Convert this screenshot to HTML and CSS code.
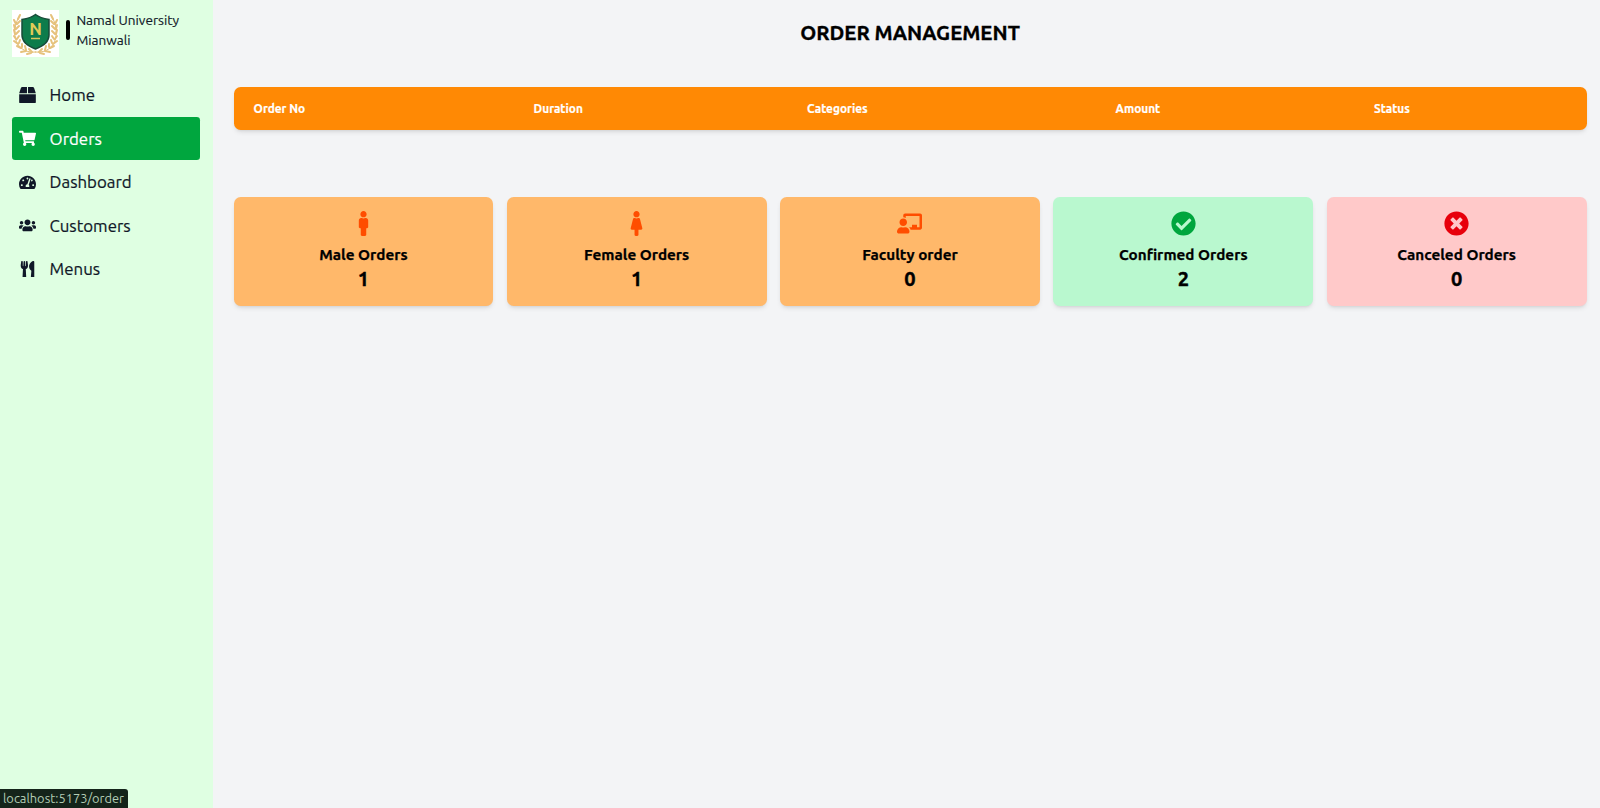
FILE: index.html
```html
<!DOCTYPE html>
<html lang="en">
<head>
<meta charset="utf-8">
<title>Order Management</title>
<link rel="stylesheet" href="styles.css">
</head>
<body>
<div class="app">
  <aside class="sidebar">
    <div class="brand">
      <svg class="logo" viewBox="0 0 47 47">
        <rect width="47" height="47" fill="#fff"/>
        <g fill="none" stroke="#e3bd73" stroke-width="1">
          <path d="M7 7C1 17 1 31 9 38q6 5 15 4M40 7c6 10 6 24-2 31q-6 5-15 4"/>
        </g>
        <g fill="none" stroke="#e6c27c" stroke-width="2" stroke-linecap="round">
          <path d="M6 9l2-4M4 14L2 10M5 14l3-3M3 19l-1-4M4 19l3-3M3 24l-1-4M4 24l3-3M4 29l-2-3M5 29l2-3M6 34l-4-3M7 33l1-3M9 38l-4-2M10 37l0-3M14 41l-5 1M14 40l-1-4M19 43l-4 1M20 42l-3-3"/>
          <path d="M41 9l-2-4M43 14l2-4M42 14l-3-3M44 19l1-4M43 19l-3-3M44 24l1-4M43 24l-3-3M43 29l2-3M42 29l-2-3M41 34l4-3M40 33l-1-3M38 38l4-2M37 37l0-3M33 41l5 1M33 40l1-4M28 43l4 1M27 42l3-3"/>
        </g>
        <path d="M23.500 4.500Q28 8 37 9.500V25q0 9-13.500 14Q10 34 10 25V9.500Q19 8 23.500 4.500z" fill="#0d7c4b" stroke="#174b38" stroke-width="1.500"/>
        <text class="logo-letter" x="23.500" y="25" text-anchor="middle">N</text>
        <path d="M19 28.500h9" stroke="#d9c95c" stroke-width="1.500"/>
      </svg>
      <span class="brand-bar"></span>
      <div class="brand-name">Namal University<br>Mianwali</div>
    </div>
    <nav class="nav">
      <a class="nav-item"><svg class="nav-icon" viewBox="0 0 512 512"><path d="M509.500 184.600L458.900 32.800C452.400 13.200 434.100 0 413.400 0H272v192h238.700c-.4-2.500-.4-5-1.200-7.400zM240 0H98.600c-20.700 0-39 13.200-45.500 32.800L2.500 184.600c-.8 2.400-.8 4.900-1.200 7.400H240V0zM0 224v240c0 26.500 21.500 48 48 48h416c26.500 0 48-21.500 48-48V224H0z"/></svg><span>Home</span></a>
      <a class="nav-item active"><svg class="nav-icon" viewBox="0 0 576 512"><path d="M528.120 301.319l47.273-208C578.806 78.301 567.391 64 551.990 64H159.208l-9.166-44.810C147.758 8.021 137.930 0 126.529 0H24C10.745 0 0 10.745 0 24v16c0 13.255 10.745 24 24 24h69.883l70.248 343.435C147.325 417.100 136 435.222 136 456c0 30.928 25.072 56 56 56s56-25.072 56-56c0-15.674-6.447-29.835-16.824-40h209.647C430.447 426.165 424 440.326 424 456c0 30.928 25.072 56 56 56s56-25.072 56-56c0-22.172-12.888-41.332-31.579-50.405l5.517-24.276c3.413-15.018-8.002-29.319-23.403-29.319H218.117l-6.545-32h293.145c11.206 0 20.920-7.754 23.403-18.681z"/></svg><span>Orders</span></a>
      <a class="nav-item"><svg class="nav-icon" viewBox="0 0 576 512"><path d="M288 32C128.940 32 0 160.940 0 320c0 52.800 14.250 102.260 39.060 144.800 5.610 9.620 16.300 15.200 27.440 15.200h443c11.140 0 21.830-5.580 27.440-15.200C561.750 422.260 576 372.800 576 320c0-159.060-128.940-288-288-288zm0 64c14.710 0 26.580 10.130 30.320 23.650-1.110 2.260-2.640 4.230-3.450 6.670l-9.220 27.670c-5.130 3.490-10.970 6.010-17.640 6.010-17.670 0-32-14.330-32-32S270.330 96 288 96zM96 384c-17.670 0-32-14.330-32-32s14.330-32 32-32 32 14.330 32 32-14.330 32-32 32zm48-160c-17.670 0-32-14.330-32-32s14.330-32 32-32 32 14.330 32 32-14.330 32-32 32zm246.770-72.410l-61.330 184C343.130 347.330 352 364.540 352 384c0 11.720-3.380 22.550-8.880 32H232.880c-5.500-9.450-8.880-20.280-8.880-32 0-33.940 26.500-61.430 59.900-63.590l61.340-184.010c4.170-12.560 17.730-19.450 30.360-15.170 12.570 4.190 19.350 17.790 15.170 30.360zm14.660 57.200l15.520-46.550c3.470-1.290 7.130-2.230 11.050-2.230 17.670 0 32 14.330 32 32s-14.330 32-32 32c-11.380-.01-20.890-6.280-26.570-15.220zM480 384c-17.670 0-32-14.330-32-32s14.330-32 32-32 32 14.330 32 32-14.330 32-32 32z"/></svg><span>Dashboard</span></a>
      <a class="nav-item"><svg class="nav-icon" viewBox="0 0 640 512"><path d="M96 224c35.300 0 64-28.700 64-64s-28.700-64-64-64-64 28.700-64 64 28.700 64 64 64zm448 0c35.300 0 64-28.700 64-64s-28.700-64-64-64-64 28.700-64 64 28.700 64 64 64zm32 32h-64c-17.600 0-33.500 7.100-45.100 18.600 40.300 22.100 68.900 62 75.100 109.400h66c17.700 0 32-14.300 32-32v-32c0-35.300-28.700-64-64-64zm-256 0c61.900 0 112-50.100 112-112S381.900 32 320 32 208 82.100 208 144s50.100 112 112 112zm76.800 32h-8.300c-20.800 10-43.900 16-68.500 16s-47.600-6-68.500-16h-8.300C179.600 288 128 339.600 128 403.200V432c0 26.500 21.500 48 48 48h288c26.500 0 48-21.500 48-48v-28.800c0-63.600-51.600-115.200-115.200-115.200zm-223.700-13.400C161.500 263.100 145.600 256 128 256H64c-35.300 0-64 28.700-64 64v32c0 17.700 14.300 32 32 32h65.900c6.300-47.400 34.900-87.300 75.200-109.400z"/></svg><span>Customers</span></a>
      <a class="nav-item"><svg class="nav-icon" viewBox="0 0 416 512"><path d="M207.900 15.200c.8 4.700 16.100 94.500 16.100 128.800 0 52.300-27.800 89.600-68.900 104.600L168 486.700c.7 13.700-10.200 25.300-24 25.300H80c-13.700 0-24.700-11.500-24-25.300l12.900-238.100C27.700 233.600 0 196.200 0 144 0 109.600 15.300 19.900 16.100 15.200 19.300-5.100 61.400-5.400 64 16.300v141.200c1.300 3.400 15.100 3.200 16 0 1.400-25.300 7.900-139.200 8-141.800 3.300-20.800 44.700-20.800 47.900 0 .2 2.700 6.600 116.500 8 141.800.9 3.200 14.800 3.400 16 0V16.300c2.600-21.600 44.800-21.400 47.900-1.100zm119.200 285.700l-15 185.100c-1.200 14 9.900 26 23.900 26h56c13.300 0 24-10.700 24-24V24c0-13.200-10.700-24-24-24-82.500 0-221.400 178.500-64.900 300.900z"/></svg><span>Menus</span></a>
    </nav>
  </aside>
  <main class="main">
    <h1 class="title">ORDER MANAGEMENT</h1>
    <div class="table-head">
      <span>Order No</span><span>Duration</span><span>Categories</span><span>Amount</span><span>Status</span>
    </div>
    <section class="cards">
      <div class="card">
        <svg class="card-icon" viewBox="0 0 192 512"><path d="M96 0c35.346 0 64 28.654 64 64s-28.654 64-64 64-64-28.654-64-64S60.654 0 96 0m48 144h-11.360c-22.711 10.443-49.590 10.894-73.280 0H48c-26.510 0-48 21.490-48 48v136c0 13.255 10.745 24 24 24h16v136c0 13.255 10.745 24 24 24h64c13.255 0 24-10.745 24-24V352h16c13.255 0 24-10.745 24-24V192c0-26.510-21.490-48-48-48z"/></svg>
        <h2 class="card-title">Male Orders</h2><p class="card-value">1</p>
      </div>
      <div class="card">
        <svg class="card-icon" viewBox="0 0 256 512"><path d="M128 0c35.346 0 64 28.654 64 64s-28.654 64-64 64c-35.346 0-64-28.654-64-64S92.654 0 128 0m119.283 354.179l-48-192A24 24 0 0 0 176 144h-11.360c-22.711 10.443-49.590 10.894-73.280 0H80a24 24 0 0 0-23.283 18.179l-48 192C4.935 369.305 16.383 384 32 384h56v104c0 13.255 10.745 24 24 24h32c13.255 0 24-10.745 24-24V384h56c15.591 0 27.071-14.671 23.283-29.821z"/></svg>
        <h2 class="card-title">Female Orders</h2><p class="card-value">1</p>
      </div>
      <div class="card">
        <svg class="card-icon" viewBox="0 0 640 512"><path d="M208 352c-2.390 0-4.780.35-7.060 1.090C187.980 357.300 174.350 360 160 360c-14.350 0-27.980-2.700-40.950-6.910-2.280-.74-4.660-1.090-7.050-1.090C49.940 352-.33 402.480 0 464.620.14 490.880 21.730 512 48 512h224c26.270 0 47.860-21.120 48-47.380.33-62.140-49.940-112.620-112-112.620zm-48-32c53.020 0 96-42.980 96-96s-42.980-96-96-96-96 42.980-96 96 42.980 96 96 96zM592 0H208c-26.470 0-48 22.250-48 49.590V96c23.420 0 45.100 6.780 64 17.800V64h352v288h-64v-64H384v64h-76.240c19.100 16.690 33.120 38.730 39.690 64H592c26.470 0 48-22.250 48-49.590V49.590C640 22.250 618.470 0 592 0z"/></svg>
        <h2 class="card-title">Faculty order</h2><p class="card-value">0</p>
      </div>
      <div class="card confirmed">
        <svg class="card-icon" viewBox="0 0 512 512"><path d="M504 256c0 136.967-111.033 248-248 248S8 392.967 8 256 119.033 8 256 8s248 111.033 248 248zM227.314 387.314l184-184c6.248-6.248 6.248-16.379 0-22.627l-22.627-22.627c-6.248-6.249-16.379-6.249-22.628 0L216 308.118l-70.059-70.059c-6.248-6.248-16.379-6.248-22.628 0l-22.627 22.627c-6.248 6.248-6.248 16.379 0 22.627l104 104c6.249 6.249 16.379 6.249 22.628.001z"/></svg>
        <h2 class="card-title">Confirmed Orders</h2><p class="card-value">2</p>
      </div>
      <div class="card canceled">
        <svg class="card-icon" viewBox="0 0 512 512"><path d="M256 8C119 8 8 119 8 256s111 248 248 248 248-111 248-248S393 8 256 8zm121.600 313.100c4.700 4.700 4.700 12.300 0 17L338 377.600c-4.700 4.700-12.300 4.700-17 0L256 312l-65.100 65.600c-4.700 4.700-12.300 4.700-17 0L134.400 338c-4.700-4.700-4.700-12.300 0-17l65.600-65-65.600-65.100c-4.700-4.700-4.700-12.300 0-17l39.600-39.600c4.700-4.700 12.300-4.700 17 0l65 65.700 65.100-65.600c4.700-4.700 12.300-4.700 17 0l39.600 39.600c4.700 4.700 4.700 12.300 0 17L312 256l65.600 65.100z"/></svg>
        <h2 class="card-title">Canceled Orders</h2><p class="card-value">0</p>
      </div>
    </section>
  </main>
</div>
<div class="status-bar">localhost:5173/order</div>
</body>
</html>
```
FILE: styles.css
```css
* { box-sizing: border-box; }
body {
  margin: 0;
  background: #f3f4f6;
  color: #000;
  font-family: Ubuntu, "Noto Sans", sans-serif;
}
.app { display: flex; height: 808px; overflow: hidden; }
.sidebar {
  width: 213px;
  flex: none;
  padding: 10px 13px 0 12.400px;
  background: #dfffe2;
  color: #101828;
}
.brand { display: flex; height: 47px; }
.logo { width: 47px; height: 47px; flex: none; }
.logo-letter { font-size: 17px; font-weight: 700; fill: #e2cc58; }
.brand-bar {
  width: 4px;
  height: 20px;
  margin: 10px 6.500px 0 6.500px;
  border-radius: 2px;
  background: #000;
  flex: none;
}
.brand-name {
  font-size: 13.600px;
  line-height: 20px;
  white-space: nowrap;
  -webkit-text-stroke: .15px currentColor;
}
.nav { margin-top: 16.400px; }
.nav-item {
  display: flex;
  align-items: center;
  gap: 13.700px;
  height: 43.500px;
  padding-left: 6.500px;
  border-radius: 3.330px;
  font-size: 16.850px;
  line-height: 24px;
  -webkit-text-stroke: .2px currentColor;
}
.nav-item.active { background: #00a63e; color: #fff; }
.nav-icon { width: 17px; height: 16.670px; fill: currentColor; flex: none; }
.main { flex: 1; padding: 18px 13.500px 0 20.500px; }
.title {
  margin: 0;
  font-size: 20.350px;
  line-height: 30px;
  font-weight: 700;
  text-align: center;
  -webkit-text-stroke: .3px currentColor;
}
.table-head {
  display: grid;
  grid-template-columns: 280px 273.500px 308.500px 258.500px auto;
  align-items: center;
  height: 43.300px;
  margin-top: 38.900px;
  padding-left: 20.100px;
  border-radius: 6.670px;
  background: #ff8904;
  color: #fff;
  font-size: 11.850px;
  font-weight: 700;
  -webkit-text-stroke: .2px currentColor;
  box-shadow: 0 3px 5px -1px rgba(0, 0, 0, .1), 0 2px 3px -2px rgba(0, 0, 0, .1);
}
.cards {
  display: grid;
  grid-template-columns: repeat(5, 1fr);
  gap: 13.400px;
  margin-top: 67.300px;
}
.card {
  display: flex;
  flex-direction: column;
  align-items: center;
  height: 108.500px;
  padding-top: 13.300px;
  border-radius: 6.670px;
  background: #ffb86a;
  box-shadow: 0 3px 5px -1px rgba(0, 0, 0, .1), 0 2px 3px -2px rgba(0, 0, 0, .1);
}
.card-icon { width: 25px; height: 25px; fill: #ff4d00; }
.card-title {
  margin: 7px 0 0;
  font-size: 15.250px;
  line-height: 23px;
  font-weight: 700;
  -webkit-text-stroke: .25px currentColor;
}
.card-value {
  margin: 0;
  font-size: 20px;
  line-height: 26px;
  font-weight: 700;
  -webkit-text-stroke: .4px currentColor;
}
.confirmed { background: #b9f8cf; }
.confirmed .card-icon { fill: #00a63e; }
.canceled { background: #ffc9c9; }
.canceled .card-icon { fill: #e7000b; }
.status-bar {
  position: fixed;
  left: 0;
  bottom: 0;
  width: 128px;
  height: 19px;
  padding-left: 3px;
  border-radius: 0 3px 0 0;
  background: #14241a;
  color: #b3cdb5;
  font-size: 12.850px;
  line-height: 19px;
  white-space: nowrap;
}
```
